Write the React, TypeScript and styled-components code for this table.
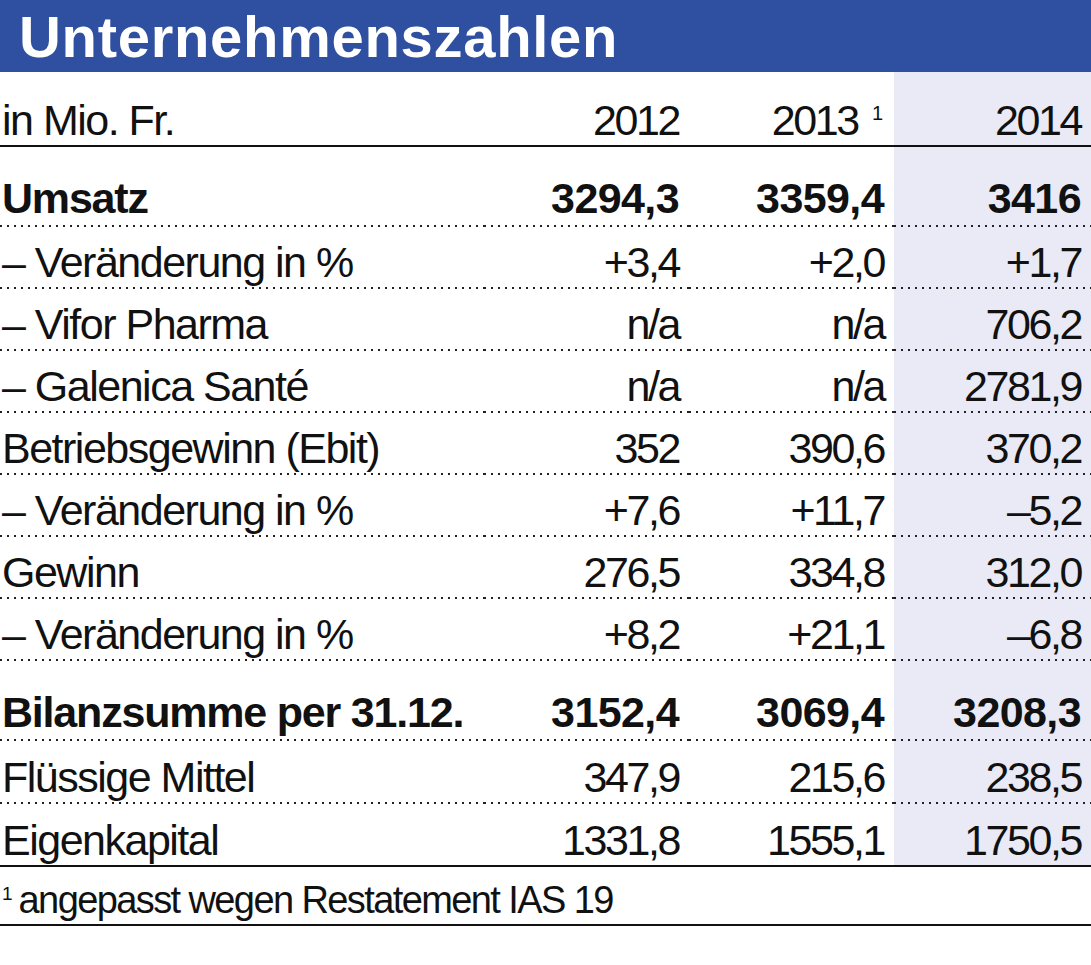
import styled, { createGlobalStyle } from 'styled-components';

type Line = 'dot' | 'solid';

type FigureRow = {
  label: string;
  values: [string, string, string];
  bold?: boolean;
  height: number;
  line: Line;
};

const rows: FigureRow[] = [
  { label: 'Umsatz', values: ['3294,3', '3359,4', '3416'], bold: true, height: 80, line: 'dot' },
  { label: '– Veränderung in %', values: ['+3,4', '+2,0', '+1,7'], height: 62, line: 'dot' },
  { label: '– Vifor Pharma', values: ['n/a', 'n/a', '706,2'], height: 62, line: 'dot' },
  { label: '– Galenica Santé', values: ['n/a', 'n/a', '2781,9'], height: 62, line: 'dot' },
  { label: 'Betriebsgewinn (Ebit)', values: ['352', '390,6', '370,2'], height: 62, line: 'dot' },
  { label: '– Veränderung in %', values: ['+7,6', '+11,7', '–5,2'], height: 62, line: 'dot' },
  { label: 'Gewinn', values: ['276,5', '334,8', '312,0'], height: 62, line: 'dot' },
  { label: '– Veränderung in %', values: ['+8,2', '+21,1', '–6,8'], height: 62, line: 'dot' },
  { label: 'Bilanzsumme per 31.12.', values: ['3152,4', '3069,4', '3208,3'], bold: true, height: 80, line: 'dot' },
  { label: 'Flüssige Mittel', values: ['347,9', '215,6', '238,5'], height: 63, line: 'dot' },
  { label: 'Eigenkapital', values: ['1331,8', '1555,1', '1750,5'], height: 63, line: 'solid' },
];

export default function App() {
  return (
    <>
      <GlobalStyle />
      <Page>
        <TitleBar>
          <Title>Unternehmenszahlen</Title>
        </TitleBar>

        <Table>
          <Row $height={75}>
            <Cell $line="solid">in Mio. Fr.</Cell>
            <Cell $line="solid" $num>2012</Cell>
            <Cell $line="solid" $num>
              2013<Sup>1</Sup>
            </Cell>
            <Cell $line="solid" $num $shade>2014</Cell>
          </Row>

          {rows.map((row, i) => (
            <Row key={i} $height={row.height}>
              <Cell $line={row.line} $bold={row.bold}>{row.label}</Cell>
              {row.values.map((v, j) => (
                <Cell key={j} $line={row.line} $bold={row.bold} $num $shade={j === 2}>
                  {v}
                </Cell>
              ))}
            </Row>
          ))}
        </Table>

        <Footnote>
          <FootSup>1</FootSup>angepasst wegen Restatement IAS 19
        </Footnote>
      </Page>
    </>
  );
}

const GlobalStyle = createGlobalStyle`
  html, body {
    margin: 0;
    padding: 0;
    background: #ffffff;
  }
`;

const Page = styled.div`
  width: 1091px;
  min-height: 965px;
  background: #ffffff;
  color: #111111;
  font-family: "Liberation Sans", Arial, sans-serif;
`;

const TitleBar = styled.div`
  height: 72px;
  box-sizing: border-box;
  padding: 8px 0 0 19px;
  background: #2f4fa0;
`;

const Title = styled.h1`
  margin: 0;
  font-size: 58px;
  line-height: 1;
  font-weight: 700;
  letter-spacing: 0.7px;
  color: #ffffff;
`;

const Table = styled.div`
  display: flex;
  flex-direction: column;
`;

const Row = styled.div<{ $height: number }>`
  display: grid;
  grid-template-columns: 1fr 205px 205px 197px;
  height: ${(p) => p.$height}px;
`;

const dotted = 'linear-gradient(to right, #222 2px, transparent 2px)';

const Cell = styled.div<{ $line: Line; $bold?: boolean; $num?: boolean; $shade?: boolean }>`
  display: flex;
  align-items: flex-end;
  justify-content: ${(p) => (p.$num ? 'flex-end' : 'flex-start')};
  box-sizing: border-box;
  padding: 0 ${(p) => (p.$num ? 10 : 0)}px ${(p) => (p.$bold ? 5 : 3)}px 2px;
  font-size: 43px;
  line-height: 1;
  white-space: nowrap;
  font-weight: ${(p) => (p.$bold ? 700 : 400)};
  letter-spacing: ${(p) => (p.$num ? (p.$bold ? '-0.6px' : '-2.4px') : p.$bold ? '-1.2px' : '-1.5px')};
  background-color: ${(p) => (p.$shade ? '#e9eaf5' : 'transparent')};
  ${(p) =>
    p.$line === 'solid'
      ? 'border-bottom: 2px solid #111;'
      : `border-bottom: 2px solid transparent;
         background-image: ${dotted};
         background-size: 7px 2px;
         background-repeat: repeat-x;
         background-position: left bottom;
         background-origin: border-box;
         background-clip: border-box;`}
`;

const Sup = styled.span`
  align-self: flex-start;
  margin: 31px 1px 0 14px;
  font-size: 20px;
  letter-spacing: 0;
`;

const Footnote = styled.div`
  height: 59px;
  box-sizing: border-box;
  display: flex;
  align-items: flex-end;
  padding: 0 0 5px 2px;
  border-bottom: 2px solid #111;
  font-size: 38px;
  line-height: 1;
  letter-spacing: -1.6px;
  white-space: nowrap;
`;

const FootSup = styled.span`
  align-self: flex-start;
  margin: 17px 6px 0 0;
  font-size: 19px;
  letter-spacing: 0;
`;
